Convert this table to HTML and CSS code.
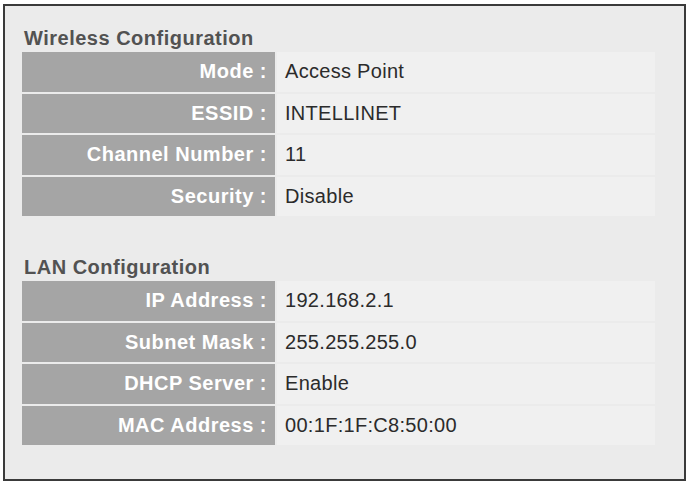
FILE: index.html
```html
<!DOCTYPE html>
<html lang="en">
<head>
  <meta charset="UTF-8" />
  <title>Status</title>
  <link rel="stylesheet" href="styles.css">
</head>
<body>
  <div class="panel">
    <div class="section">
      <div class="section-title">Wireless Configuration</div>
      <div class="info-grid">
        <div class="label">Mode :</div>
        <div class="value">Access Point</div>
        <div class="label">ESSID :</div>
        <div class="value">INTELLINET</div>
        <div class="label">Channel Number :</div>
        <div class="value">11</div>
        <div class="label">Security :</div>
        <div class="value">Disable</div>
      </div>
    </div>

    <div class="section second">
      <div class="section-title">LAN Configuration</div>
      <div class="info-grid">
        <div class="label">IP Address :</div>
        <div class="value">192.168.2.1</div>
        <div class="label">Subnet Mask :</div>
        <div class="value">255.255.255.0</div>
        <div class="label">DHCP Server :</div>
        <div class="value">Enable</div>
        <div class="label">MAC Address :</div>
        <div class="value">00:1F:1F:C8:50:00</div>
      </div>
    </div>
  </div>
</body>
</html>
```

FILE: styles.css
```css
body {
  margin: 0;
  background-color: #ffffff;
  font-family: "Liberation Sans", Arial, sans-serif;
}

.panel {
  box-sizing: border-box;
  width: 683px;
  height: 477px;
  margin: 4px 0 0 3px;
  border: 2px solid #3a3a3a;
  background-color: #ebebeb;
  padding: 0 0 0 17px;
}

.section-title {
  padding: 20px 0 0 2px;
  margin-bottom: 2px;
  font-size: 20px;
  line-height: 24px;
  font-weight: bold;
  letter-spacing: 0.5px;
  color: #525252;
}

.section.second .section-title {
  padding-top: 39px;
}

.info-grid {
  display: grid;
  grid-template-columns: 253px 378px;
  grid-auto-rows: 39.5px;
  gap: 2px;
}

.label {
  background-color: #a5a5a5;
  color: #ffffff;
  font-weight: bold;
  font-size: 20px;
  letter-spacing: 0.5px;
  padding-right: 8px;
  display: flex;
  align-items: center;
  justify-content: flex-end;
}

.value {
  background-color: #f0f0f0;
  color: #2b2b2b;
  font-size: 20px;
  letter-spacing: 0.3px;
  padding-left: 8px;
  display: flex;
  align-items: center;
}
```
